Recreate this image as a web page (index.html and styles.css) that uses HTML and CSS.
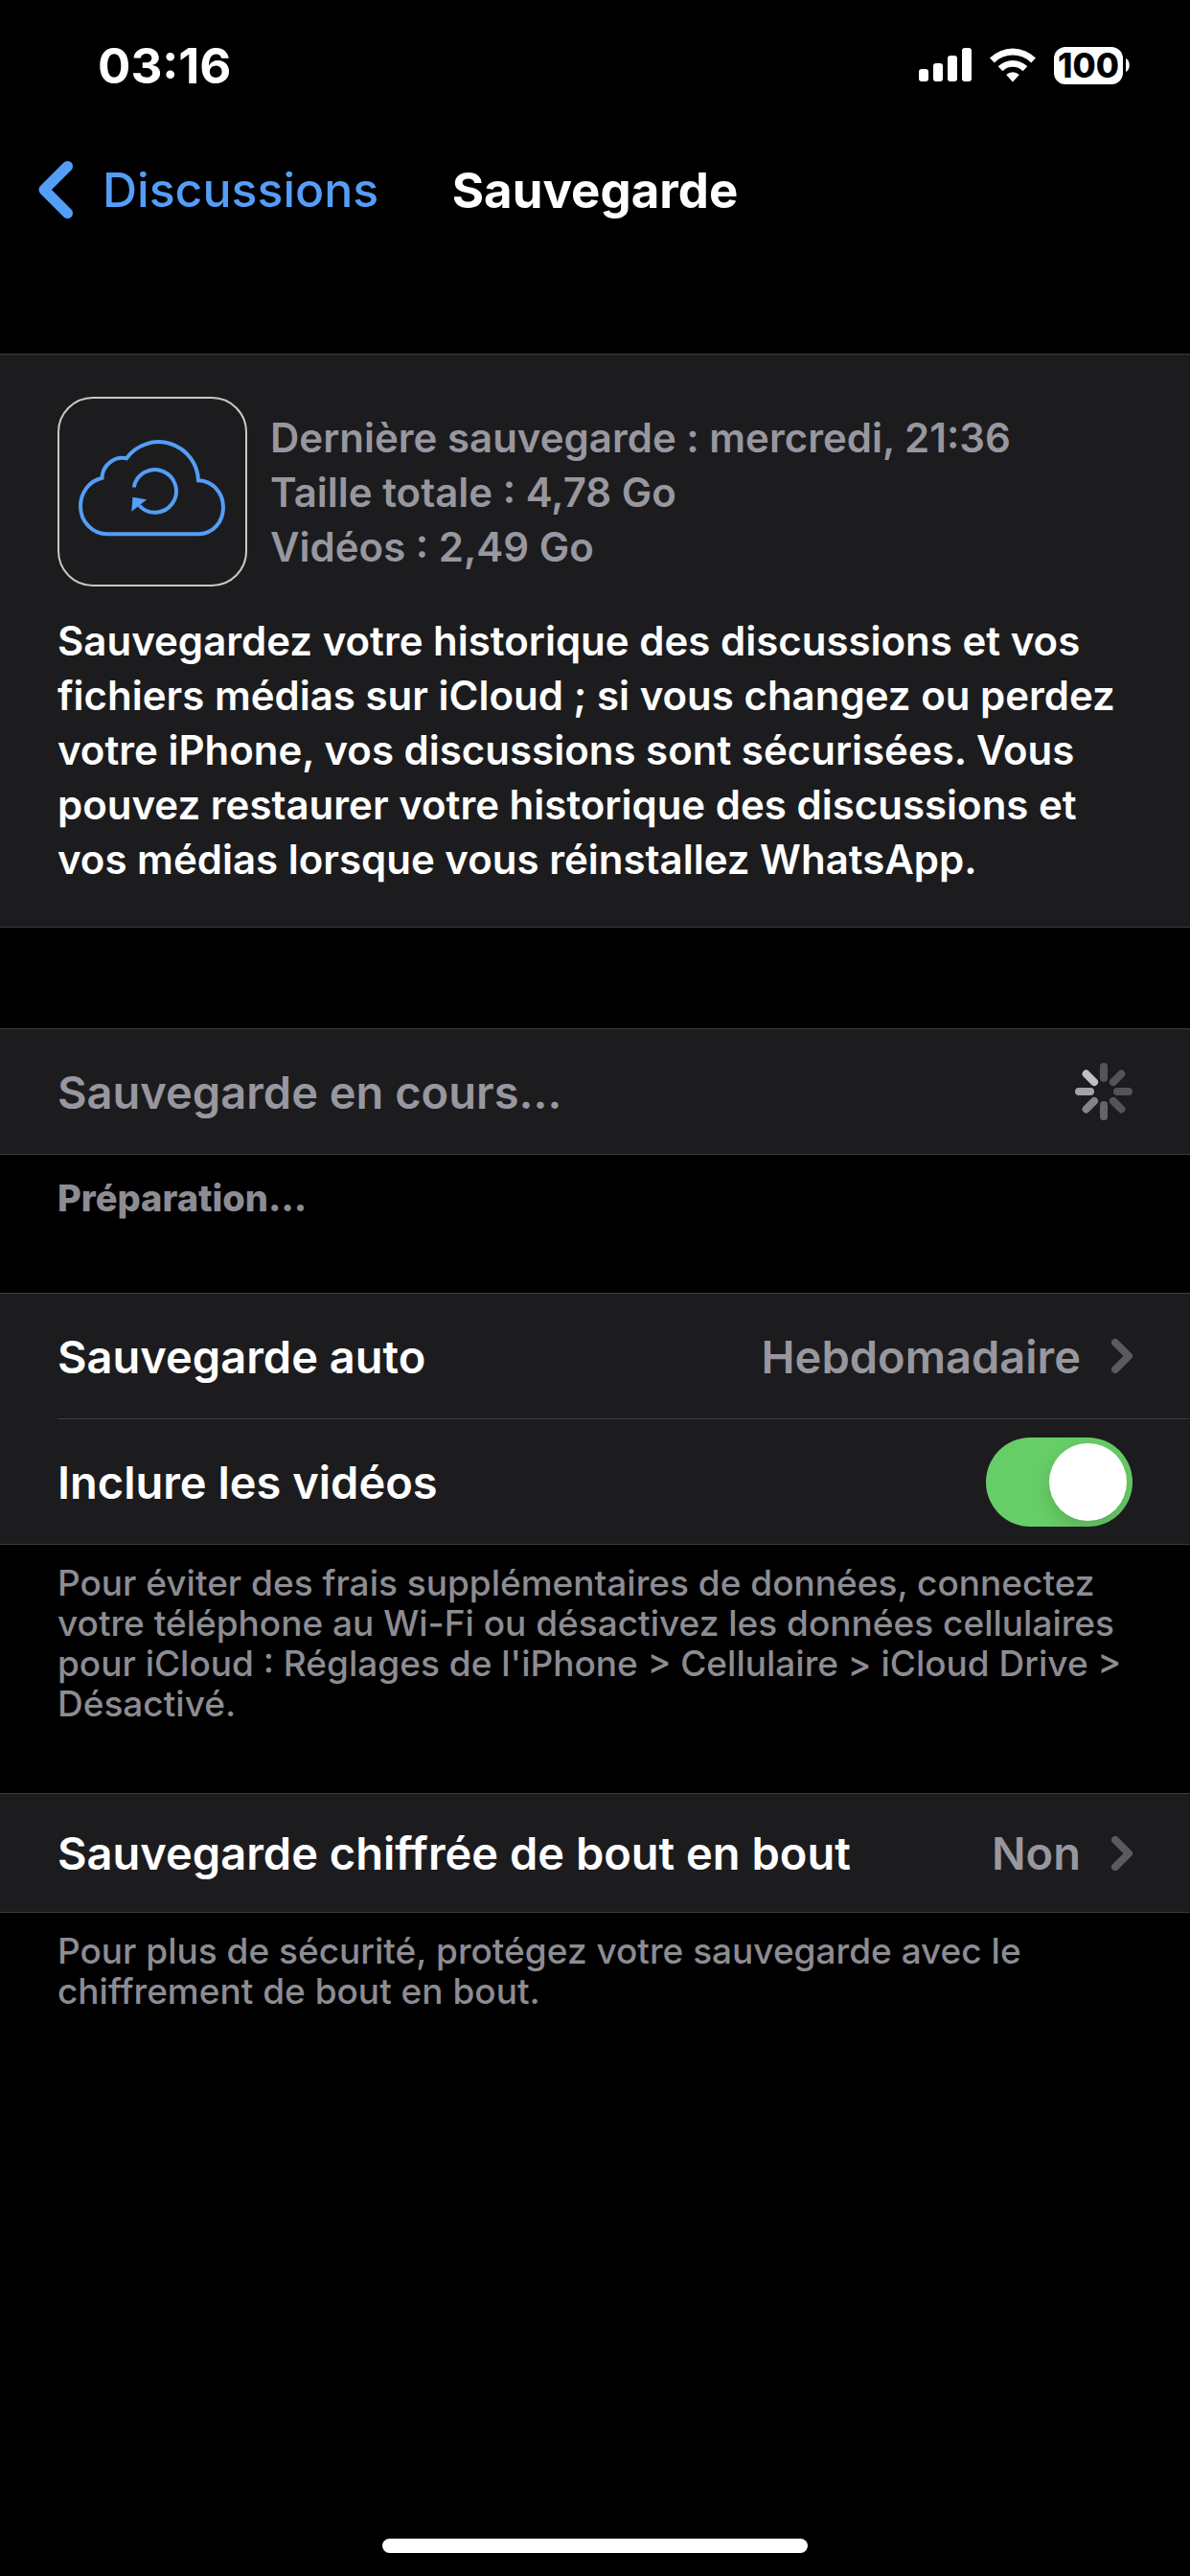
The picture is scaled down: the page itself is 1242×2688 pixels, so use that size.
FILE: index.html
```html
<!DOCTYPE html>
<html lang="fr">
<head>
  <meta charset="utf-8">
  <meta name="viewport" content="width=device-width, initial-scale=1">
  <title>Sauvegarde</title>
  <link rel="stylesheet" href="styles.css">
</head>
<body>
  <div class="screen">
    <div class="status-bar">
      <span class="time">03:16</span>
      <div class="indicators">
        <svg class="signal" width="55" height="36" viewBox="0 0 55 36" aria-hidden="true">
          <rect x="0" y="22" width="10" height="13" rx="3"/>
          <rect x="15" y="16" width="10" height="19" rx="3"/>
          <rect x="30" y="8" width="10" height="27" rx="3"/>
          <rect x="45" y="0" width="10" height="35" rx="3"/>
        </svg>
        <svg class="wifi" width="48" height="36" viewBox="0 0 48 36" aria-hidden="true">
          <path d="M0 10.500A34 34 0 0 1 48 10.500L43.200 15.400A27.200 27.200 0 0 0 4.800 15.400Z"/>
          <path d="M8.700 19.300A21.700 21.700 0 0 1 39.300 19.300L34.500 24.200A14.900 14.900 0 0 0 13.500 24.200Z"/>
          <path d="M17.200 28A9.700 9.700 0 0 1 30.800 28L24 35.500Z"/>
        </svg>
        <div class="battery">
          <span class="battery-level">100</span>
          <svg width="4" height="14" viewBox="0 0 4 14" aria-hidden="true"><path d="M0 0C5 2 5 12 0 14Z"/></svg>
        </div>
      </div>
    </div>

    <header class="nav-bar">
      <a class="back" href="#discussions">
        <svg width="36" height="60" viewBox="0 0 36 60" aria-hidden="true"><path d="M30.500 5.500L6 30L30.500 54.500"/></svg>
        <span>Discussions</span>
      </a>
      <h1 class="title">Sauvegarde</h1>
    </header>

    <main class="content">
      <section class="panel summary">
        <div class="summary-head">
          <svg class="cloud" width="198" height="198" viewBox="0 0 198 198" aria-hidden="true">
            <rect class="cloud-frame" x="1" y="1" width="196" height="196" rx="36"/>
            <path class="cloud-line" d="M52 143.300C36 143.300 24 130 24 114.300C24 100 33 88 46.500 84.800A21.500 21.500 0 0 1 72 64.200A41.500 41.500 0 0 1 147 87.300C162 88 173 100 173 115.300C173 131 162 143.300 147 143.300Z"/>
            <path class="cloud-line" d="M79.700 94.500A22.300 22.300 0 1 1 85.200 113.500"/>
            <path class="cloud-arrow" d="M78.500 104.800L93.200 107.300L77.300 119.800Z"/>
          </svg>
          <div class="facts">
            <div>Dernière sauvegarde : mercredi, 21:36</div>
            <div>Taille totale : 4,78 Go</div>
            <div>Vidéos : 2,49 Go</div>
          </div>
        </div>
        <p class="description">Sauvegardez votre historique des discussions et vos fichiers médias sur iCloud ; si vous changez ou perdez votre iPhone, vos discussions sont sécurisées. Vous pouvez restaurer votre historique des discussions et vos médias lorsque vous réinstallez WhatsApp.</p>
      </section>

      <section class="group progress">
        <div class="panel">
          <div class="row">
            <span class="muted">Sauvegarde en cours…</span>
            <svg class="spinner" width="60" height="60" viewBox="-30 -30 60 60" aria-hidden="true">
              <path stroke="#545458" d="M0 -26V-14"/>
              <path stroke="#545458" d="M18.400 -18.400L9.900 -9.900"/>
              <path stroke="#545458" d="M26 0H14"/>
              <path stroke="#545458" d="M18.400 18.400L9.900 9.900"/>
              <path stroke="#656569" d="M0 26V14"/>
              <path stroke="#848389" d="M-18.400 18.400L-9.900 9.900"/>
              <path stroke="#a3a2a9" d="M-26 0H-14"/>
              <path stroke="#c1c0c8" d="M-18.400 -18.400L-9.900 -9.900"/>
            </svg>
          </div>
        </div>
        <p class="note note-strong">Préparation…</p>
      </section>

      <section class="group">
        <div class="panel">
          <button class="row" type="button">
            <span>Sauvegarde auto</span>
            <span class="value">Hebdomadaire
              <svg width="22" height="36" viewBox="0 0 22 36" aria-hidden="true"><path d="M4 4L18 18L4 32"/></svg>
            </span>
          </button>
          <div class="divider"></div>
          <label class="row" for="videos">
            <span>Inclure les vidéos</span>
            <input class="switch" id="videos" type="checkbox" role="switch" checked>
          </label>
        </div>
        <p class="note">Pour éviter des frais supplémentaires de données, connectez votre téléphone au Wi-Fi ou désactivez les données cellulaires pour iCloud : Réglages de l'iPhone &gt; Cellulaire &gt; iCloud Drive &gt; Désactivé.</p>
      </section>

      <section class="group">
        <div class="panel">
          <button class="row row-compact" type="button">
            <span>Sauvegarde chiffrée de bout en bout</span>
            <span class="value">Non
              <svg width="22" height="36" viewBox="0 0 22 36" aria-hidden="true"><path d="M4 4L18 18L4 32"/></svg>
            </span>
          </button>
        </div>
        <p class="note">Pour plus de sécurité, protégez votre sauvegarde avec le chiffrement de bout en bout.</p>
      </section>
    </main>

    <div class="home-indicator"></div>
  </div>
</body>
</html>
```

FILE: styles.css
```css
* {
  box-sizing: border-box;
}

body {
  margin: 0;
  background: #000;
  color: #fff;
  font-family: Inter, "Liberation Sans", sans-serif;
  font-size: 47px;
  font-weight: 600;
}

h1,
p {
  margin: 0;
}

.screen {
  display: flex;
  flex-direction: column;
  min-height: 100vh;
}

.status-bar {
  display: flex;
  align-items: center;
  justify-content: space-between;
  height: 136px;
  padding: 0 63px 0 102px;
}

.time {
  font-size: 51px;
  font-weight: 700;
}

.indicators {
  display: flex;
  align-items: center;
  gap: 19px;
  fill: #fff;
}

.battery {
  display: flex;
  align-items: center;
  gap: 3px;
}

.battery-level {
  width: 72px;
  border-radius: 12px;
  background: #fff;
  color: #000;
  font-size: 35px;
  font-weight: 800;
  line-height: 39px;
  text-align: center;
}

.nav-bar {
  display: grid;
  grid-template-columns: 1fr auto 1fr;
  align-items: center;
  height: 124px;
  padding: 0 40px;
}

.back {
  display: flex;
  align-items: center;
  gap: 31px;
  color: #549ef8;
  font-size: 50px;
  font-weight: 500;
  text-decoration: none;
}

.back path {
  fill: none;
  stroke: #549ef8;
  stroke-width: 11;
  stroke-linecap: round;
  stroke-linejoin: round;
}

.title {
  font-size: 51px;
  font-weight: 700;
}

.content {
  display: flex;
  flex-direction: column;
  flex: 1;
  padding-top: 109px;
}

.panel {
  border: solid #3c3c3e;
  border-width: 1px 0;
  background: #1c1c1e;
}

.summary {
  padding: 44px 60px 42px;
  margin-bottom: 105px;
  font-size: 42px;
  line-height: 57px;
}

.summary-head {
  display: flex;
  align-items: center;
  gap: 24px;
  margin-bottom: 28px;
}

.facts,
.muted,
.value {
  color: #98979f;
}

.cloud {
  flex: none;
  fill: none;
}

.cloud-frame {
  stroke: #c8c8c8;
  stroke-width: 2;
}

.cloud-line {
  stroke: #549ef8;
  stroke-width: 4;
}

.cloud-arrow {
  fill: #549ef8;
}

.group {
  margin-bottom: 72px;
}

.progress {
  margin-bottom: 78px;
}

.row {
  display: flex;
  align-items: center;
  justify-content: space-between;
  width: 100%;
  height: 130px;
  padding: 0 60px;
  border: 0;
  background: none;
  color: inherit;
  font: inherit;
  text-align: left;
}

.row-compact {
  height: 123px;
}

.divider {
  height: 1px;
  margin-left: 60px;
  background: #3c3c3e;
}

.value {
  display: flex;
  align-items: center;
  gap: 32px;
}

.value path {
  fill: none;
  stroke: #5b5b5f;
  stroke-width: 8;
  stroke-linecap: round;
  stroke-linejoin: round;
}

.spinner {
  stroke-width: 8;
  stroke-linecap: round;
}

.switch {
  display: flex;
  justify-content: flex-end;
  width: 153px;
  height: 93px;
  margin: 0;
  padding: 6px;
  appearance: none;
  border-radius: 47px;
  background: #67ce67;
  overflow: hidden;
}

.switch::before {
  content: "";
  width: 81px;
  height: 81px;
  border-radius: 50%;
  background: #fff;
  box-shadow: 0 8px 20px rgba(0, 0, 0, 0.15);
}

.switch:not(:checked) {
  justify-content: flex-start;
  background: #39393d;
}

.note {
  padding: 19px 60px 0;
  color: #8d8c93;
  font-size: 37px;
  font-weight: 500;
  line-height: 42px;
}

.note-strong {
  padding-top: 24px;
  font-size: 38px;
  font-weight: 800;
}

.home-indicator {
  width: 444px;
  height: 15px;
  margin: 0 auto 24px;
  border-radius: 8px;
  background: #fff;
}
```
